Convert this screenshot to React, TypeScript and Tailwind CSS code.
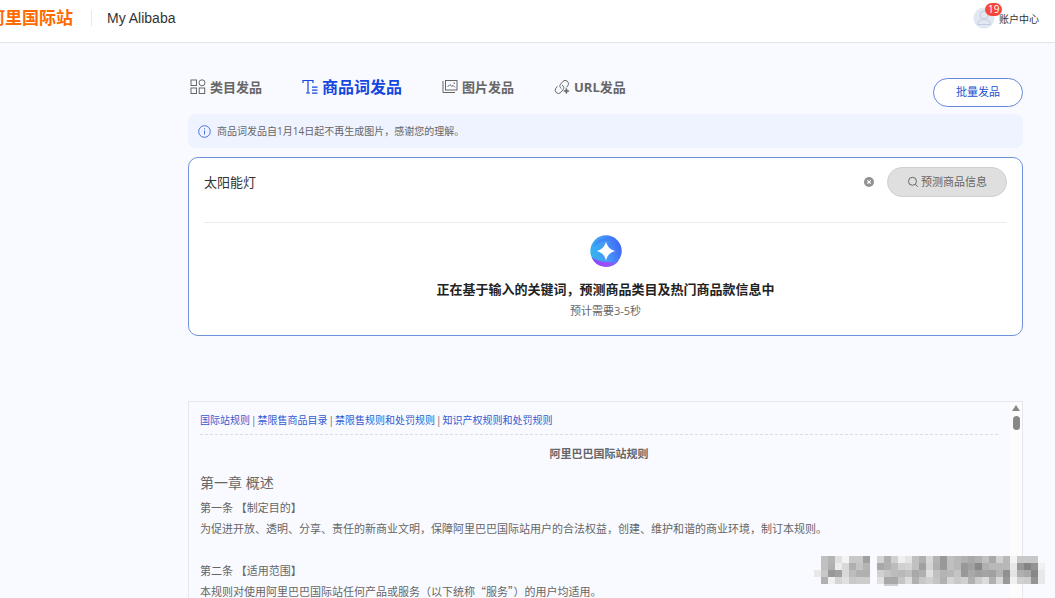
import { useState } from "react";

const RULE_LINKS = [
  "国际站规则",
  "禁限售商品目录",
  "禁限售规则和处罚规则",
  "知识产权规则和处罚规则",
];

// one grey level (hex) per block, ".." is an empty block
const MOSAIC = [
  ".. c0 b4 e0 f4 c8 c8 a0 .. d4 b0 d0 f0 e4 c0 b0 d8 b4 98 c0 b8 b0 a8 b0 c0 a8 d0 b8 f4 c8 c8 c8 ..",
  ".. c0 b0 ec d8 b0 c4 b4 .. a8 b0 bc d0 d4 c0 a0 d4 b0 98 c0 b8 98 a0 88 b0 b8 b8 b8 e8 98 84 94 f0",
  "e8 c8 98 a0 d8 bc b0 b0 .. d0 c4 bc b8 c0 a8 b0 e0 c0 b4 b8 c4 98 a8 a0 a4 a0 b4 90 e4 b0 a8 88 e8",
  ".. b0 f0 d4 e0 c8 cc cc .. e0 a8 a8 c4 dc b0 c8 d0 c4 b0 d4 c8 d0 b0 cc dc b0 d8 98 f0 d0 cc 94 e8",
];

function GridIcon() {
  return (
    <svg width="16" height="16" viewBox="0 0 16 16" fill="none" stroke="currentColor">
      <rect x="1" y="1" width="5.5" height="5.5" />
      <circle cx="12" cy="3.8" r="3" />
      <rect x="1" y="9" width="5.5" height="5.5" />
      <rect x="9.2" y="9" width="5.5" height="5.5" />
    </svg>
  );
}

function WordIcon() {
  return (
    <svg width="16" height="16" viewBox="0 0 16 16" fill="none" stroke="currentColor">
      <path d="M1 4V1.5h10V4M6 1.5V14M4 14h4M10 8.2h5.5M10 11.2h5.5M10 14.2h5.5" strokeWidth="1.2" />
    </svg>
  );
}

function ImageIcon() {
  return (
    <svg width="16" height="16" viewBox="0 0 16 16" fill="none" stroke="currentColor">
      <rect x="3.5" y="1.5" width="11.5" height="9.5" />
      <path d="M1 2v11.5h12M5.5 8l2.3-2.4 2 1.8L11 6.3 13 8.4" />
      <path d="M11.5 4.2h1.4" strokeWidth="1.3" />
    </svg>
  );
}

function LinkIcon() {
  return (
    <svg width="16" height="16" viewBox="0 0 16 16" fill="none" stroke="currentColor" strokeLinecap="round">
      <path d="M7.2 9.6C5.600 8.500 5.400 6.600 6.500 5.200l2.300-2.700a3.300 3.300 0 0 1 5 4.300l-1 1.200" />
      <path d="M8.300 6.200c1.700 1 2 3 .9 4.400l-2.300 2.800a3.300 3.300 0 0 1-5-4.300l1.200-1.500" />
      <path d="M12.400 9.200l.8 2 2 .8-2 .8-.8 2-.8-2-2-.8 2-.8z" fill="currentColor" strokeWidth="0.600" />
    </svg>
  );
}

const TABS = [
  { name: "类目发品", Icon: GridIcon },
  { name: "商品词发品", Icon: WordIcon },
  { name: "图片发品", Icon: ImageIcon },
  { name: "URL发品", Icon: LinkIcon },
];

function Header() {
  return (
    <header className="flex h-[43px] shrink-0 items-center border-b border-[#e3e4ea] bg-white pr-4 pb-[6px]">
      <a href="#" className="-ml-3 text-[17px] leading-6 font-bold text-[#ff6a00]">
        阿里国际站
      </a>
      <span className="ml-[18px] h-4 w-px bg-[#e8e8e8]" />
      <a href="#" className="ml-[15px] font-['Liberation_Sans',sans-serif] text-sm text-[#333]">
        My Alibaba
      </a>
      <a href="#" className="ml-auto flex items-center gap-1 text-[10px] text-[#333]">
        <span className="relative">
          <svg width="22" height="22" viewBox="0 0 22 22" fill="none">
            <circle cx="11" cy="11" r="10.500" fill="#e1e8f2" />
            <circle cx="11" cy="8" r="4" stroke="#c3cedd" />
            <path d="M4.500 17.500c0-3 2.500-5 6.500-5s6.500 2 6.500 5z" stroke="#c3cedd" />
          </svg>
          <span className="absolute -top-1 left-3 rounded-full bg-[#f5483b] px-[3px] text-[10px] leading-[13px] text-white">
            19
          </span>
        </span>
        <span className="pt-[2px]">账户中心</span>
      </a>
    </header>
  );
}

function SparkLogo() {
  return (
    <svg width="32" height="32" viewBox="0 0 32 32">
      <defs>
        <linearGradient id="ball" x1="0" y1="0.600" x2="1" y2="0.300">
          <stop offset="0" stopColor="#35b5ee" />
          <stop offset="0.500" stopColor="#4597f8" />
          <stop offset="1" stopColor="#3f62f6" />
        </linearGradient>
        <linearGradient id="glow" x1="0" y1="0" x2="1" y2="0">
          <stop offset="0" stopColor="#7b50f5" />
          <stop offset="0.500" stopColor="#a34bfa" />
          <stop offset="1" stopColor="#5b78fa" />
        </linearGradient>
      </defs>
      <circle cx="16" cy="16" r="15.700" fill="url(#ball)" />
      <path d="M3 12C6 3 18 0 27 6 20 4 9 6 3 12z" fill="#3f7ff8" opacity="0.700" />
      <path d="M1.500 22c7 5.500 18 6.500 27.500 3.200A15.700 15.700 0 0 1 1.500 22z" fill="url(#glow)" />
      <path d="M16 6.500c1.500 5.500 4 8 9.500 9.500-5.500 1.500-8 4-9.500 9.500-1.500-5.500-4-8-9.500-9.500 5.500-1.500 8-4 9.500-9.500z" fill="#fff" />
    </svg>
  );
}

function Mosaic() {
  return (
    <svg className="absolute right-[10px] bottom-[11px]" width="231" height="31" viewBox="0 0 231 31" shapeRendering="crispEdges" aria-hidden="true">
      {MOSAIC.map((row, y) =>
        row.split(" ").map((c, x) =>
          c === ".." ? null : (
            <rect key={`${x}-${y}`} x={x * 7} y={y * 7} width="7" height="7" fill={`#${c}${c}${c}`} />
          )
        )
      )}
      <rect x="70" y="28" width="14" height="2" fill="#cfcfd2" />
    </svg>
  );
}

export default function App() {
  const [tab, setTab] = useState(1);
  const [keyword, setKeyword] = useState("太阳能灯");

  return (
    <div className="relative flex h-screen flex-col overflow-hidden bg-[#f9faff] font-['Open_Sans','Noto_Sans_CJK_SC',sans-serif] text-[#666]">
      <Header />

      <main className="flex min-h-0 flex-1 flex-col pr-8 pl-[188px]">
        <div className="flex h-[71px] shrink-0 items-center justify-between pt-4">
          <nav className="flex items-center gap-10 pl-[2px]">
            {TABS.map(({ name, Icon }, i) => (
              <button
                key={name}
                onClick={() => setTab(i)}
                className={
                  i === tab
                    ? "flex items-center gap-1 text-base leading-6 font-bold text-[#1546e0]"
                    : "flex items-center gap-1 text-[13px] leading-6 font-bold"
                }
              >
                <Icon />
                {name}
              </button>
            ))}
          </nav>
          <button className="mt-3 h-[29px] rounded-full border border-[#6488d8] bg-white px-[22px] text-[11px] text-[#2450d0]">
            批量发品
          </button>
        </div>

        <div className="flex h-[34px] shrink-0 items-center gap-[6px] rounded-lg bg-[#eef3ff] px-[10px] text-[10px]">
          <svg width="13" height="13" viewBox="0 0 13 13" fill="none" stroke="#4a72e0">
            <circle cx="6.500" cy="6.500" r="5.800" />
            <path d="M6.500 5.500v4M6.500 3.200v1.200" />
          </svg>
          商品词发品自1月14日起不再生成图片，感谢您的理解。
        </div>

        <section className="mt-[9px] h-[179px] shrink-0 rounded-[10px] border border-[#7092dc] bg-white px-[15px] pt-[9px]">
          <div className="flex h-[56px] items-start border-b border-[#ebebeb]">
            <input
              aria-label="商品关键词"
              value={keyword}
              onChange={(e) => setKeyword(e.target.value)}
              className="h-7 min-w-0 flex-1 text-[13px] text-[#333] outline-none"
            />
            <button aria-label="清空" onClick={() => setKeyword("")} className="mr-3 flex h-[30px] items-center">
              <svg width="12" height="12" viewBox="0 0 12 12">
                <circle cx="6" cy="6" r="5" fill="#929292" />
                <path d="M4.300 4.300l3.400 3.400M7.700 4.300L4.300 7.700" stroke="#fff" strokeWidth="1.200" />
              </svg>
            </button>
            <button className="flex h-[30px] items-center gap-[2px] rounded-full border border-[#d0d0d0] bg-[#dfdfdf] px-[19px] text-[11px]">
              <svg width="12" height="12" viewBox="0 0 12 12" fill="none" stroke="currentColor">
                <circle cx="5.500" cy="5.300" r="4" />
                <path d="M8.500 8.300l2.200 2.400" />
              </svg>
              预测商品信息
            </button>
          </div>
          <div className="flex flex-col items-center pt-3">
            <SparkLogo />
            <h2 className="mt-3 text-[13px] leading-5 font-bold text-[#222]">
              正在基于输入的关键词，预测商品类目及热门商品款信息中
            </h2>
            <p className="mt-[2px] text-[11px] leading-5">预计需要3-5秒</p>
          </div>
        </section>

        <section className="mt-[65px] flex min-h-0 flex-1 border border-b-0 border-[#e6e6ec]">
          <div className="min-w-0 flex-1 overflow-hidden pr-3 pl-[11px] text-[11px] leading-[21px]">
            <div className="flex h-[33px] items-center border-b border-dashed border-[#dcdce0] pt-1 text-[10px]">
              {RULE_LINKS.map((link, i) => (
                <span key={link}>
                  {i > 0 && <span className="px-px">|</span>}
                  <a href="#" className="text-[#2f5bd0]">
                    {link}
                  </a>
                </span>
              ))}
            </div>
            <h3 className="mt-2 text-center font-bold">阿里巴巴国际站规则</h3>
            <h4 className="mt-2 text-sm leading-[21px]">第一章 概述</h4>
            <p className="mt-1">第一条 【制定目的】</p>
            <p>为促进开放、透明、分享、责任的新商业文明，保障阿里巴巴国际站用户的合法权益，创建、维护和谐的商业环境，制订本规则。</p>
            <p className="mt-[21px]">第二条 【适用范围】</p>
            <p lang="zh-CN" className="font-['Noto_Sans_CJK_SC',sans-serif]">
              本规则对使用阿里巴巴国际站任何产品或服务（以下统称“服务”）的用户均适用。
            </p>
          </div>
          <div className="flex w-3 flex-col items-center gap-[5px] bg-[#fcfcfc] pt-[3px]">
            <svg width="8" height="6" viewBox="0 0 8 6">
              <path d="M4 0l4 6H0z" fill="#888" />
            </svg>
            <span className="h-[14px] w-[7px] rounded-full bg-[#888]" />
          </div>
        </section>
      </main>

      <Mosaic />
    </div>
  );
}
